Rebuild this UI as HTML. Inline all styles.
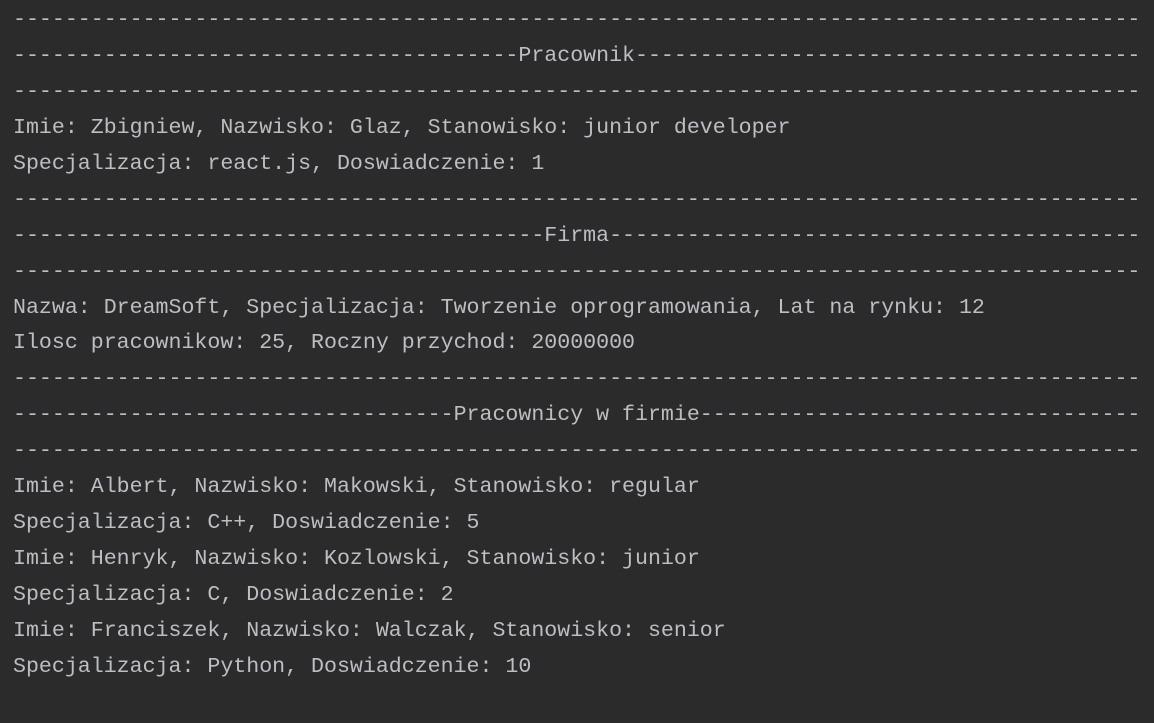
<!DOCTYPE html>
<html><head><meta charset="utf-8"><style>
html,body{margin:0;padding:0;background:#2b2b2b;width:1154px;height:723px;overflow:hidden}
pre{margin:0;position:absolute;left:13px;top:3px;font-family:"Liberation Mono","DejaVu Sans Mono",monospace;font-size:21.6px;line-height:35.93px;color:#bcbec4;white-space:pre}
</style></head><body><pre>---------------------------------------------------------------------------------------
---------------------------------------Pracownik---------------------------------------
---------------------------------------------------------------------------------------
Imie: Zbigniew, Nazwisko: Glaz, Stanowisko: junior developer
Specjalizacja: react.js, Doswiadczenie: 1
---------------------------------------------------------------------------------------
-----------------------------------------Firma-----------------------------------------
---------------------------------------------------------------------------------------
Nazwa: DreamSoft, Specjalizacja: Tworzenie oprogramowania, Lat na rynku: 12
Ilosc pracownikow: 25, Roczny przychod: 20000000
---------------------------------------------------------------------------------------
----------------------------------Pracownicy w firmie----------------------------------
---------------------------------------------------------------------------------------
Imie: Albert, Nazwisko: Makowski, Stanowisko: regular
Specjalizacja: C++, Doswiadczenie: 5
Imie: Henryk, Nazwisko: Kozlowski, Stanowisko: junior
Specjalizacja: C, Doswiadczenie: 2
Imie: Franciszek, Nazwisko: Walczak, Stanowisko: senior
Specjalizacja: Python, Doswiadczenie: 10</pre></body></html>
